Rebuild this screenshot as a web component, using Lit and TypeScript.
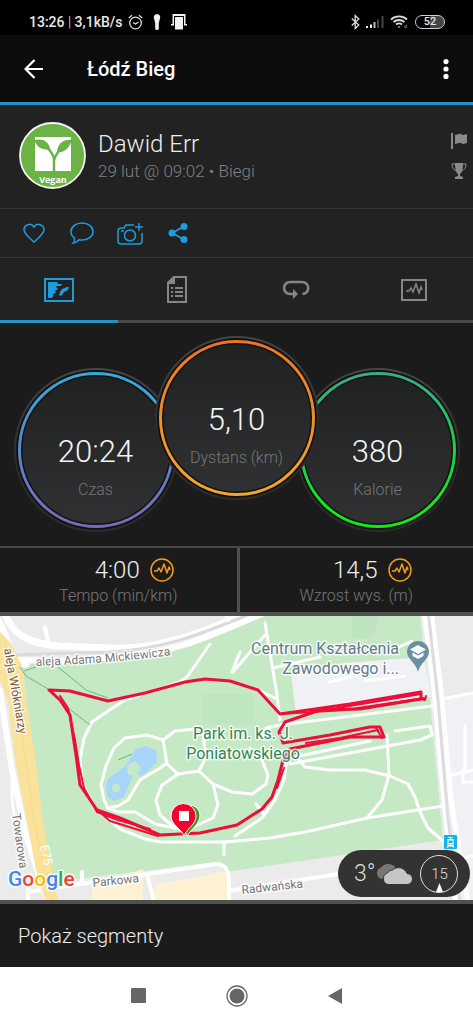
import { LitElement, html, css, svg } from "lit";
import { customElement, property, state } from "lit/decorators.js";
import { classMap } from "lit/directives/class-map.js";

@customElement("status-bar")
class StatusBar extends LitElement {
  static styles = css`
    :host {
      display: flex;
      justify-content: space-between;
      align-items: center;
      height: 35px;
      padding: 8px 28px 0 29px;
      box-sizing: border-box;
      background: #000;
      color: #e8e8e8;
      font-size: 14px;
      line-height: 20px;
      font-weight: 500;
    }
    .side {
      display: flex;
      align-items: center;
    }
    .left {
      gap: 6px;
    }
    .right {
      gap: 6px;
    }
    .sep {
      font-weight: 300;
    }
    .flash {
      margin-left: 4px;
    }
    .doc {
      margin-left: 4px;
    }
    svg {
      display: block;
    }
    .battery {
      width: 30px;
      height: 14px;
      box-sizing: border-box;
      border: 1px solid #d0d0d0;
      border-radius: 7px;
      background: linear-gradient(90deg, #000 50%, #444 50%);
      font-size: 11px;
      line-height: 12px;
      text-align: center;
    }
  `;
  render() {
    return html`
      <div class="side left">
        <span>13:26 <span class="sep">|</span> 3,1kB/s</span>
        <svg width="15" height="16" viewBox="0 0 15 16" fill="none" stroke="#ddd" stroke-width="1.3">
          <circle cx="7.500" cy="9" r="5.800" />
          <path d="M5 8.500l2.500 1.500 3-2M.8 4L4 1.200M14.200 4L11 1.200" />
        </svg>
        <svg class="flash" width="8" height="16" viewBox="0 0 8 16" fill="#f2f2f2">
          <path d="M4 0a3.300 3.300 0 0 1 3 4.500L5.800 9v5.500a1.800 1.500 0 0 1-3.600 0V9L1 4.500A3.300 3.300 0 0 1 4 0z" />
        </svg>
        <svg class="doc" width="16" height="16" viewBox="0 0 16 16" fill="#f2f2f2">
          <path d="M4 3h8v12.500H4zM1.500 0h13v10H16v1.500h-3V2H3v9.500H0V10h1.500z" />
        </svg>
      </div>
      <div class="side right">
        <svg width="9" height="16" viewBox="0 0 9 16" fill="none" stroke="#ddd" stroke-width="1.300">
          <path d="M.8 4.500l7 6.500-3.600 3.500v-13L7.800 5l-7 6.500" />
        </svg>
        <svg width="18" height="14" viewBox="0 0 18 14">
          <path d="M0 11h2v2H0zM4 9.500h2V13H4z" fill="#eee" />
          <path d="M7.500 7h2v6h-2z" fill="#bbb" />
          <path d="M11 4.500h2V13h-2zM15.500 1h2v12h-2z" fill="#444" />
        </svg>
        <svg width="19" height="15" viewBox="0 0 19 15" fill="none" stroke="#ddd" stroke-width="1.800">
          <path d="M1 5.500a12 12 0 0 1 16 0M3.500 8a8.500 8.500 0 0 1 11 0M6 10.500a5 5 0 0 1 6 0" />
          <path d="M7.500 12.500h3L9 14z" fill="#ddd" stroke="none" />
          <path d="M14 13l3-2M15 14l2-1" stroke="#888" stroke-width="1" />
        </svg>
        <span class="battery">52</span>
      </div>
    `;
  }
}

@customElement("stat-gauge")
class StatGauge extends LitElement {
  @property() value = "";
  @property() label = "";
  @property() from = "";
  @property() to = "";
  static styles = css`
    :host {
      position: relative;
      display: flex;
      flex-direction: column;
      align-items: center;
      justify-content: center;
      width: 164px;
      height: 164px;
      flex: none;
    }
    .ring {
      position: absolute;
      inset: 0;
    }
    .value,
    .label {
      position: relative;
      font-weight: 300;
    }
    .value {
      font-size: 31px;
      line-height: 40px;
      color: #f4f4f4;
      margin-top: 32px;
    }
    .label {
      font-size: 16px;
      line-height: 20px;
      color: #777;
      margin-top: 8px;
    }
  `;
  render() {
    return html`
      <svg class="ring" viewBox="0 0 164 164" aria-hidden="true">
        <defs>
          <linearGradient id="stroke" x1="0" y1="0" x2="0" y2="1">
            <stop offset="0" stop-color=${this.from} />
            <stop offset="1" stop-color=${this.to} />
          </linearGradient>
          <linearGradient id="face" x1="0" y1="0" x2="0" y2="1">
            <stop offset="0" stop-color="#202121" />
            <stop offset="1" stop-color="#303132" />
          </linearGradient>
          <linearGradient id="rim" x1="0" y1="0" x2="0" y2="1">
            <stop offset="0" stop-color="#454545" />
            <stop offset="0.600" stop-color="#2a2a2a" />
            <stop offset="1" stop-color="#2c2c2e" />
          </linearGradient>
        </defs>
        <circle cx="82" cy="82" r="81" fill="#1d1d1e" stroke="url(#rim)" stroke-width="2" />
        <circle cx="82" cy="82" r="76.500" fill="url(#face)" stroke="#111" stroke-width="6" />
        <circle cx="82" cy="82" r="76.500" fill="none" stroke="url(#stroke)" stroke-width="3" />
      </svg>
      <span class="value">${this.value}</span>
      <span class="label">${this.label}</span>
    `;
  }
}

@customElement("route-map")
class RouteMap extends LitElement {
  static styles = css`
    :host {
      display: block;
      position: relative;
    }
    .map {
      display: block;
      width: 100%;
    }
    .halo {
      paint-order: stroke;
      stroke: #fff;
      stroke-width: 3px;
      stroke-linejoin: round;
      stroke-opacity: 0.8;
    }
    .road {
      font-size: 12px;
      fill: #757575;
    }
    .weather {
      position: absolute;
      right: 3px;
      bottom: 3px;
      display: flex;
      align-items: center;
      height: 47px;
      width: 132px;
      box-sizing: border-box;
      padding: 0 14px 0 16px;
      border-radius: 24px;
      background: #333;
      color: #ddd;
      font-weight: 300;
    }
    .temp {
      font-size: 23px;
      line-height: 28px;
    }
    .cloud {
      flex: none;
      margin-right: 7px;
    }
    .wind {
      position: relative;
      flex: none;
      width: 38px;
      height: 38px;
      box-sizing: border-box;
      border: 1px solid #ddd;
      border-radius: 50%;
      font-size: 15px;
      line-height: 36px;
      text-align: center;
    }
    .needle {
      position: absolute;
      left: 15px;
      bottom: 0;
    }
  `;

  private ground() {
    return svg`
      <rect x="0" y="616" width="473" height="284" fill="#ebebeb" />
      <path d="M440 698L473 693V900H460L446 800z" fill="#f0f1f4" />
      <path d="M22 664L160 653L210 636L262 616H420L430 700L443 840L233 871L225 872L217 862L52 882L42 820L34 760z" fill="#c5e8c5" />
      <path d="M352 616h26l-2 14-10 9-14-2z" fill="#bde3bf" />
      <path d="M203 694h50v30h-50z" fill="#c0e5c1" />
      <path d="M291 674L345 663L424 657L431 697L296 714z" fill="#f0f1f4" />
      <path d="M92 885L143 869V900H92zM155 885L228 871V900H153z" fill="#fdf3d3" />
      <path d="M106 786C107 775 118 774 126 765L136 749L146 746L156 750L157 762L148 771L141 776L134 773L129 785L124 797L114 801L107 796z" fill="#a9d4fb" />
      <path d="M127 766l8-5 6 7-6 8-7-1z" fill="#c5e8c5" />
      <circle cx="116" cy="788" r="4" fill="#c5e8c5" />
    `;
  }

  private roads() {
    return svg`
      <g fill="none" stroke="#fff" stroke-linecap="round" stroke-linejoin="round">
        <path d="M-2 620C8 636 8 650 14 664L26 664M4 612C14 640 36 644 60 646L110 648C150 650 190 638 240 616" stroke-width="7" />
        <path d="M12 660L60 661L130 656C180 650 200 640 262 614" stroke-width="6" />
        <path d="M10 655L110 652C170 648 200 634 250 614" stroke="#dadada" stroke-width="3" />
        <path d="M45 627l3 14M225 612l3 8" stroke-width="4" />
        <path d="M0 690L12 770L26 836L48 902" stroke-width="6" />
        <path d="M12 769L12 800L14 814" stroke-width="3" />
        <path d="M424 610L434 690L444 800L456 902M431 610L441 690L451 800L468 902" stroke-width="5" />
        <path d="M428 610L438 700L448 820L460 902" stroke="#dcdcdf" stroke-width="3" />
        <path d="M441 699L473 693M451 775L473 770M463 770v12h10M461 858L473 856M465 725v45" stroke-width="3" />
        <path d="M28 892L80 884L215 864C224 863 229 870 229 880V902M228 891L345 873M147 874L154 902M82 872V884M28 890V902" stroke-width="4" />
      </g>
      <path d="M0 632L10 642L22 666L29 720L35 756L43 822L50 860L58 900H45L36 870L27 822L15 760L8 700L0 680z" fill="#fbe29b" />
      <path d="M5 640L20 720L34 820L52 900" fill="none" stroke="#f7d98a" stroke-width="1" />
      <g fill="none" stroke="#fff" stroke-width="3" stroke-linecap="round" stroke-linejoin="round">
        <path d="M210 644L187 677L180 682M240 652l-8 20M233 672L265 635" />
        <path d="M180 682L125 700L108 711L92 722L84 738L80 760L83 785L95 808L120 829L145 839L160 842H225L270 838L305 832L367 818L443 806" />
        <path d="M224 842v13" />
        <path d="M106 766L114 748L125 738L147 735L163 740L175 731L196 729M163 740L167 764L178 774M106 766L101 785L104 800L108 808L118 806L128 800L140 780L160 768L167 763" />
        <path d="M178 774L162 785L156 800L160 815L175 828M178 774L199 771L213 784L218 805L213 818L195 826M199 771L206 757L203 735M213 784L232 792L252 794L266 784L268 775L262 760L250 748" />
        <path d="M108 808L118 812H135L155 824L175 828H190" />
        <path d="M287 757L284 780L275 800L262 818L235 836M256 804l8 10" />
        <path d="M298 758L305 767L330 770H365L390 776L408 784L415 797L420 812L428 828L443 841" />
        <path d="M265 623L277 695L280 720M258 690L275 698M273 668L320 657M388 652L412 641" />
        <path d="M262 737L266 728L280 725L432 706M290 764L420 740L432 735L430 726L395 731M295 757L370 741M387 735L389 775L382 800L367 818" />
        <path d="M329 682l22-5M365 681l40-5" />
      </g>
      <path d="M377 618C378 632 370 636 366 645" fill="none" stroke="#d5d8d5" stroke-width="2" />
      <g fill="none" stroke="#6fb583" stroke-width="1">
        <path d="M20 667L26 676L48 689M24 671L36 667M58 667L86 690L108 698M68 708L90 725M118 760L132 754" />
      </g>
    `;
  }

  private route() {
    return svg`
      <g fill="none" stroke="#ec0f3a" stroke-width="3" stroke-linejoin="round" stroke-linecap="round">
        <path d="M49 690L70 691L108 701L145 693L185 682L205 679L230 681L258 690L280 714L350 704L421 692V699L360 709L320 710L285 722L279 732L283 743L330 735L370 727L380 727L384 737L350 737L290 749L283 760L278 780L272 797L262 809L237 825L200 833L160 835L120 818L97 810L80 785L76 755L70 715L60 700z" />
        <path d="M280 714L345 710L424 698M320 711L421 694M306 743L340 738L378 730M295 753L283 762M284 768L277 788" stroke-width="2" />
        <path d="M60 696L68 708L75 740L79 765L84 788L97 812L118 820L150 829M97 810L110 821L158 836" stroke-width="2" />
        <path d="M421 699l4 1 1-4M376 728l6 10" stroke-width="2" />
      </g>
      <path d="M187 836c-6-14-8-15-8-20a10 10 0 0 1 21-1c0 9-8 13-13 21z" fill="#43961f" stroke="#fff" stroke-width="1" />
      <path d="M184 836c-3-8-13-11-13-20a12.500 12.500 0 0 1 25 0c0 9-9 12-12 20z" fill="#f5002e" stroke="#fff" stroke-width="1" />
      <rect x="179" y="811" width="10" height="10" fill="#fff" />
    `;
  }

  private labels() {
    return svg`
      <defs><path id="avenue" d="M36 666C80 664 130 662 190 652" /></defs>
      <text class="halo road"><textPath href="#avenue">aleja Adama Mickiewicza</textPath></text>
      <text class="halo" font-size="12" fill="#7a5a3c" transform="translate(4 649) rotate(80)">aleja Włókniarzy</text>
      <text class="halo road" transform="translate(12 814) rotate(82)">Towarowa</text>
      <text font-size="12" fill="#fff" transform="translate(40 846) rotate(77)">E75</text>
      <text class="halo road" transform="translate(93 887) rotate(-6)">Parkowa</text>
      <text class="halo road" transform="translate(242 894) rotate(-6)">Radwańska</text>
      <g class="halo" font-size="16" fill="#617b8c" text-anchor="end">
        <text x="399" y="654">Centrum Kształcenia</text>
        <text x="399" y="674">Zawodowego i...</text>
      </g>
      <g class="halo" font-size="16" fill="#35865a" text-anchor="middle">
        <text x="243" y="739">Park im. ks. J.</text>
        <text x="243" y="759">Poniatowskiego</text>
      </g>
      <path d="M418 672c-2-9-11-13-11-20a11 11 0 0 1 22 0c0 7-9 11-11 20z" fill="#6a90a0" />
      <path d="M418 645l8 4.500-8 4.500-8-4.500zM412.500 652.500l5.500 3 5.500-3v3.500l-5.500 3-5.500-3z" fill="#fff" />
      <rect x="444" y="835" width="13" height="14" rx="1" fill="#12b5ea" />
      <path d="M448 837h5v1h-2v1h2.500v7l1 1.500h-1.500l-1-1h-3l-1 1h-1.500l1-1.500v-7h2.500v-1h-2zM448.500 840.500v2.500h4v-2.500zM449 844v1h1v-1zM451.500 844v1h1v-1z" fill="#fff" fill-rule="evenodd" />
      <text class="halo" x="8" y="886" font-size="21" font-weight="500"><tspan fill="#4285f4">G</tspan><tspan fill="#ea4335">o</tspan><tspan fill="#fbbc05">o</tspan><tspan fill="#4285f4">g</tspan><tspan fill="#34a853">l</tspan><tspan fill="#ea4335">e</tspan></text>
    `;
  }

  render() {
    return html`
      <svg class="map" viewBox="0 616 473 284">
        ${this.ground()} ${this.roads()} ${this.route()} ${this.labels()}
      </svg>
      <div class="weather">
        <span class="temp">3°</span>
        <svg class="cloud" width="38" height="24" viewBox="0 0 38 24">
          <path d="M7 17a6 6 0 0 1-1-11.500A9 9 0 0 1 20 5l3 12z" fill="#777" />
          <path d="M13 22.500a6 6 0 0 1-.5-11.500 5 5 0 0 1 5-3 9 9 0 0 1 14.500 3.500 5.500 5.500 0 0 1 0 11z" fill="#c6c6c6" stroke="#333" stroke-width="1" />
        </svg>
        <span class="wind">15
          <svg class="needle" width="7" height="9" viewBox="0 0 7 9"><path d="M3.500 0L7 9H0z" fill="#fff" /></svg>
        </span>
      </div>
    `;
  }
}

const pulse = "M-8 1h3l2-3 2 4 3-8 3 9 2-6 1 3";

@customElement("app-root")
class AppRoot extends LitElement {
  @state() private tab = 0;

  static styles = css`
    :host {
      display: flex;
      flex-direction: column;
      min-height: 100vh;
      background: #1b1b1b;
      color: #eee;
      font-family: Roboto, "Liberation Sans", sans-serif;
    }
    button {
      display: flex;
      align-items: center;
      justify-content: center;
      border: 0;
      padding: 0;
      background: none;
      color: inherit;
      font: inherit;
      cursor: pointer;
    }
    svg {
      display: block;
      flex: none;
    }
    .bar {
      display: flex;
      align-items: center;
      height: 67px;
      padding: 0 9px 0 16px;
      background: #0c0c0c;
      border-bottom: 3px solid #2591c8;
    }
    .bar-btn {
      width: 36px;
      height: 48px;
    }
    .title {
      flex: 1;
      margin: 0 0 0 35px;
      font-size: 20px;
      line-height: 28px;
      font-weight: 500;
      color: #fff;
    }
    .profile {
      display: flex;
      align-items: center;
      gap: 12px;
      padding: 17px 5px 19px 19px;
      background: #222;
      border-bottom: 1px solid #363636;
    }
    .who {
      flex: 1;
      display: flex;
      flex-direction: column;
      font-weight: 300;
    }
    .name {
      font-size: 24px;
      line-height: 30px;
    }
    .when {
      font-size: 17px;
      line-height: 24px;
      color: #808080;
    }
    .marks {
      display: flex;
      flex-direction: column;
      gap: 12px;
    }
    .actions {
      display: flex;
      gap: 16px;
      padding: 8px 18px;
      background: #222;
      border-bottom: 1px solid #363636;
      color: #1e9cdc;
    }
    .action {
      width: 32px;
      height: 32px;
    }
    .tabs {
      display: grid;
      grid-template-columns: repeat(4, 1fr);
      background: #222;
    }
    .tab {
      height: 65px;
      padding-top: 2px;
      border-bottom: 3px solid #484848;
      color: #868686;
    }
    .tab.on {
      color: #1e9cdc;
      border-bottom-color: #2591c8;
    }
    .gauges {
      display: flex;
      justify-content: center;
      align-items: flex-end;
      padding: 13px 0 14px;
    }
    .side {
      margin-top: 32px;
    }
    .main {
      margin: 0 -23px 32px;
      z-index: 1;
    }
    .stats {
      display: grid;
      grid-template-columns: 1fr 1fr;
      border-top: 2px solid #464646;
      border-bottom: 4px solid #505050;
    }
    .stat {
      display: flex;
      flex-direction: column;
      align-items: center;
      padding: 8px 0 4px;
      font-weight: 300;
    }
    .stat + .stat {
      border-left: 3px solid #505050;
    }
    .figure {
      display: flex;
      align-items: center;
      gap: 10px;
      padding-left: 32px;
      font-size: 24px;
      line-height: 28px;
    }
    .caption {
      font-size: 16px;
      line-height: 24px;
      color: #777;
    }
    .segments {
      justify-content: flex-start;
      height: 67px;
      padding: 0 18px;
      border-top: 4px solid #505050;
      font-size: 20px;
      line-height: 28px;
      font-weight: 300;
    }
    .nav {
      flex: 1;
      display: flex;
      justify-content: center;
      align-items: center;
      gap: 50px;
      min-height: 57px;
      background: #fff;
      color: #666;
    }
    .nav-btn {
      width: 48px;
      height: 48px;
    }
  `;

  private stat(value: string, caption: string) {
    return html`
      <div class="stat">
        <div class="figure">
          ${value}
          <svg width="24" height="24" viewBox="-12 -12 24 24" fill="none" stroke="#f39a1e" stroke-width="1.500">
            <circle r="11" />
            <path d=${pulse} stroke-linejoin="round" />
          </svg>
        </div>
        <span class="caption">${caption}</span>
      </div>
    `;
  }

  private tabs() {
    const icons = [
      html`<svg width="30" height="24" viewBox="0 0 30 24" fill="currentColor">
        <path d="M0 0h30v24H0zM2 2v20h26V2z" fill-rule="evenodd" />
        <path d="M4 4h9l1 2h4l-1 2h-4l-1 1 2 2-3 2 1 2-3 1v3l-2 1H4zM16 14l2-3 5-2h2l-1 3-4 2-2 3-3 1z" />
      </svg>`,
      html`<svg width="20" height="28" viewBox="0 0 20 28" fill="none" stroke="currentColor" stroke-width="2">
        <path d="M7 1h12v25H1V7z" />
        <path d="M1 7h6V1z" fill="currentColor" />
        <path d="M4 12h2M8 12h8M4 16h2M8 16h8M4 20h2M8 20h8" />
      </svg>`,
      html`<svg width="28" height="20" viewBox="0 0 28 20" fill="none" stroke="currentColor" stroke-width="2.500">
        <path d="M12 14H8A6 6 0 0 1 8 2H20A6 6 0 0 1 20.500 14" />
        <path d="M11 9l5 5-5 5z" fill="currentColor" stroke="none" />
      </svg>`,
      html`<svg width="26" height="22" viewBox="-13 -11 26 22" fill="none" stroke="currentColor" stroke-width="2">
        <path d="M-12-10h24v20h-24z" />
        <path d=${pulse} stroke-width="1.500" />
      </svg>`,
    ];
    const names = ["Mapa", "Szczegóły", "Okrążenia", "Wykresy"];
    return icons.map(
      (icon, i) => html`<button
        class=${classMap({ tab: true, on: i === this.tab })}
        role="tab"
        aria-label=${names[i]}
        aria-selected=${i === this.tab}
        @click=${() => (this.tab = i)}
      >${icon}</button>`
    );
  }

  render() {
    return html`
      <status-bar></status-bar>
      <header class="bar">
        <button class="bar-btn" aria-label="Wstecz">
          <svg width="20" height="20" viewBox="0 0 20 20" fill="none" stroke="#fff" stroke-width="2.200">
            <path d="M19 10H2M10.500 1L1.500 10l9 9" />
          </svg>
        </button>
        <h1 class="title">Łódź Bieg</h1>
        <button class="bar-btn" aria-label="Menu">
          <svg width="6" height="20" viewBox="0 0 6 20" fill="#fff">
            <circle cx="3" cy="2.600" r="2.600" /><circle cx="3" cy="10" r="2.600" /><circle cx="3" cy="17.400" r="2.600" />
          </svg>
        </button>
      </header>
      <section class="profile">
        <svg width="67" height="67" viewBox="0 0 67 67">
          <circle cx="33.500" cy="33.500" r="32.500" fill="#6ab344" stroke="#f4f7ee" stroke-width="1.800" />
          <path d="M16 15h36v34H16z" fill="#fff" />
          <path d="M15 18c8-2 15 1 16 9-8 2-13-2-16-9zM53 18c-8-1-14 3-15 12 8 1 12-4 15-12z" fill="#6ab344" />
          <path d="M20 20c7 4 13 9 15 16v13M48 22c-6 4-11 9-13 16" fill="none" stroke="#6ab344" stroke-width="2.500" />
          <text x="34" y="61" font-family="Open Sans" font-size="9" font-weight="700" fill="#fff" text-anchor="middle">Vegan</text>
        </svg>
        <div class="who">
          <span class="name">Dawid Err</span>
          <span class="when">29 lut @ 09:02 • Biegi</span>
        </div>
        <div class="marks">
          <svg width="17" height="18" viewBox="0 0 17 18" fill="#8a8a8a">
            <path d="M0 1h2v16H0zM4 3l4-1c2-1 3 1 4 1l4-1v9l-4 1c-1 0-2-2-4-1l-4 1z" />
          </svg>
          <svg width="16" height="18" viewBox="0 0 16 18" fill="#8a8a8a">
            <path d="M4 1h8c0 6-1 10-3 11v2l3 1v2H4v-2l3-1v-2C5 11 4 7 4 1z" />
            <path d="M4 2H1c0 4 2 6 4 7M12 2h3c0 4-2 6-4 7" fill="none" stroke="#8a8a8a" />
          </svg>
        </div>
      </section>
      <div class="actions">
        <button class="action" aria-label="Lubię to">
          <svg width="22" height="20" viewBox="0 0 22 20" fill="none" stroke="currentColor" stroke-width="1.500">
            <path d="M11 19C7 15 1 11 1 6.500 1 2 8-1 11 4c3-5 10-2 10 2.500C21 11 15 15 11 19z" />
          </svg>
        </button>
        <button class="action" aria-label="Komentarz">
          <svg width="24" height="22" viewBox="0 0 24 22" fill="none" stroke="currentColor" stroke-width="1.500">
            <path d="M12 1c6 0 11 3.500 11 8.500S18 18 12 18c-1 0-2 0-3-.3C7 20 5 21 3 21c1-1 2-3 1.500-5C2 14.500 1 12 1 9.500 1 4.500 6 1 12 1z" />
          </svg>
        </button>
        <button class="action" aria-label="Dodaj zdjęcie">
          <svg width="27" height="23" viewBox="0 0 27 23" fill="none" stroke="currentColor" stroke-width="1.500">
            <path d="M17 3H9L7 6H4a3 3 0 0 0-3 3v10a3 3 0 0 0 3 3h18a3 3 0 0 0 3-3V11M22 1v8M18 5h8M4 9h3" />
            <circle cx="13" cy="13.500" r="5.500" />
          </svg>
        </button>
        <button class="action" aria-label="Udostępnij">
          <svg width="20" height="20" viewBox="0 0 20 20" fill="currentColor">
            <path d="M16 3.500L4 10l12 6.500" fill="none" stroke="currentColor" stroke-width="1.800" />
            <circle cx="4" cy="10" r="3.500" /><circle cx="16" cy="3.500" r="3.500" /><circle cx="16" cy="16.500" r="3.500" />
          </svg>
        </button>
      </div>
      <div class="tabs" role="tablist">${this.tabs()}</div>
      <section class="gauges">
        <stat-gauge class="side" value="20:24" label="Czas" from="#35a9dd" to="#7a68b4"></stat-gauge>
        <stat-gauge class="main" value="5,10" label="Dystans (km)" from="#ec7526" to="#f3a72c"></stat-gauge>
        <stat-gauge class="side" value="380" label="Kalorie" from="#37ac88" to="#0cf010"></stat-gauge>
      </section>
      <section class="stats">
        ${this.stat("4:00", "Tempo (min/km)")} ${this.stat("14,5", "Wzrost wys. (m)")}
      </section>
      <route-map></route-map>
      <button class="segments">Pokaż segmenty</button>
      <nav class="nav">
        <button class="nav-btn" aria-label="Ostatnie">
          <svg width="15" height="15"><rect width="15" height="15" rx="1" fill="currentColor" /></svg>
        </button>
        <button class="nav-btn" aria-label="Ekran główny">
          <svg width="22" height="22" viewBox="0 0 22 22"><circle cx="11" cy="11" r="10" fill="none" stroke="currentColor" stroke-width="1.300" /><circle cx="11" cy="11" r="7.500" fill="currentColor" /></svg>
        </button>
        <button class="nav-btn" aria-label="Powrót">
          <svg width="14" height="16" viewBox="0 0 14 16"><path d="M14 0v16L0 8z" fill="currentColor" /></svg>
        </button>
      </nav>
    `;
  }
}
